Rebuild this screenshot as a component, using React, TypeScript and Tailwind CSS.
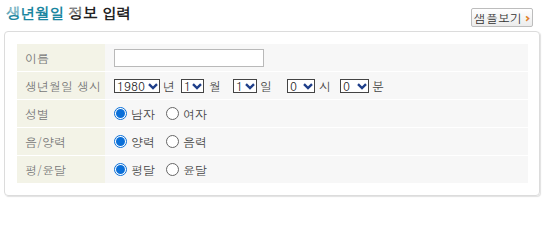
const FONT = "font-['Dotum','Noto_Sans_CJK_KR','Noto_Sans',sans-serif]"

function Select({ value, width }: { value: string; width: string }) {
  return (
    <span
      className={`inline-flex h-[14px] items-center justify-between border border-[#444] bg-white pl-[2px] pr-[1px] text-[12px] leading-none text-[#222] ${width}`}
    >
      <span>{value}</span>
      <svg width="10" height="8" viewBox="0 0 10 8" className="text-[#1f3f8a]">
        <path d="M1 2.2 5 6 9 2.2" fill="none" stroke="currentColor" strokeWidth="2.4" />
      </svg>
    </span>
  )
}

function Radio({ checked }: { checked?: boolean }) {
  return checked ? (
    <span className="flex h-[13px] w-[13px] shrink-0 items-center justify-center rounded-full border border-[#0a6fd8] bg-white">
      <span className="h-[9px] w-[9px] rounded-full bg-[#0a6fd8]" />
    </span>
  ) : (
    <span className="block h-[13px] w-[13px] shrink-0 rounded-full border border-[#666] bg-white" />
  )
}

function RadioPair({ a, b }: { a: string; b: string }) {
  return (
    <div className="flex items-center text-[12px] text-[#444]">
      <Radio checked />
      <span className="ml-[4px]">{a}</span>
      <span className="ml-[11px]">
        <Radio />
      </span>
      <span className="ml-[4px]">{b}</span>
    </div>
  )
}

const ROWS: { label: string; body: React.ReactNode }[] = [
  {
    label: '이름',
    body: <span className="block h-[18px] w-[150px] border border-[#b9b9b9] bg-white" />,
  },
  {
    label: '생년월일 생시',
    body: (
      <div className="flex items-center text-[12px] text-[#444]">
        <Select value="1980" width="w-[46px]" />
        <span className="ml-[3px]">년</span>
        <span className="ml-[6px]">
          <Select value="1" width="w-[23px]" />
        </span>
        <span className="ml-[5px]">월</span>
        <span className="ml-[12px]">
          <Select value="1" width="w-[24px]" />
        </span>
        <span className="ml-[3px]">일</span>
        <span className="ml-[15px]">
          <Select value="0" width="w-[28px]" />
        </span>
        <span className="ml-[4px]">시</span>
        <span className="ml-[9px]">
          <Select value="0" width="w-[29px]" />
        </span>
        <span className="ml-[3px]">분</span>
      </div>
    ),
  },
  { label: '성별', body: <RadioPair a="남자" b="여자" /> },
  { label: '음/양력', body: <RadioPair a="양력" b="음력" /> },
  { label: '평/윤달', body: <RadioPair a="평달" b="윤달" /> },
]

export default function App() {
  return (
    <div className={`h-[201px] w-[546px] bg-white ${FONT}`}>
      <div className="flex h-[31px] items-start justify-between pl-[6px] pr-[13px]">
        <h1 className="mt-[4px] text-[15px] font-bold leading-[18px] tracking-[-0.5px]">
          <span className="text-[#1a86a0]">생년월일</span>{' '}
          <span className="text-[#222]">정보 입력</span>
        </h1>
        <button className="mt-[8px] flex h-[19px] w-[62px] items-center justify-center gap-[3px] rounded-[2px] border border-[#bdbdbd] bg-gradient-to-b from-white to-[#ececec] text-[12px] leading-none text-[#333]">
          샘플보기
          <span className="text-[14px] font-bold leading-none text-[#e0802a]">›</span>
        </button>
      </div>

      <div className="ml-[4px] h-[165px] w-[536px] rounded-[4px] border border-[#dcdcdc] pb-[12px] pl-[12px] pr-[11px] pt-[12px] shadow-[1px_1px_1px_rgba(0,0,0,0.12)]">
        <div className="flex flex-col gap-px bg-white">
          {ROWS.map(({ label, body }) => (
            <div key={label} className="flex h-[27px]">
              <div className="flex w-[88px] items-center bg-[#f3f3e7] pl-[8px] text-[12px] text-[#777]">
                {label}
              </div>
              <div className="flex flex-1 items-center bg-[#f7f7f7] pl-[9px]">{body}</div>
            </div>
          ))}
        </div>
      </div>
    </div>
  )
}
